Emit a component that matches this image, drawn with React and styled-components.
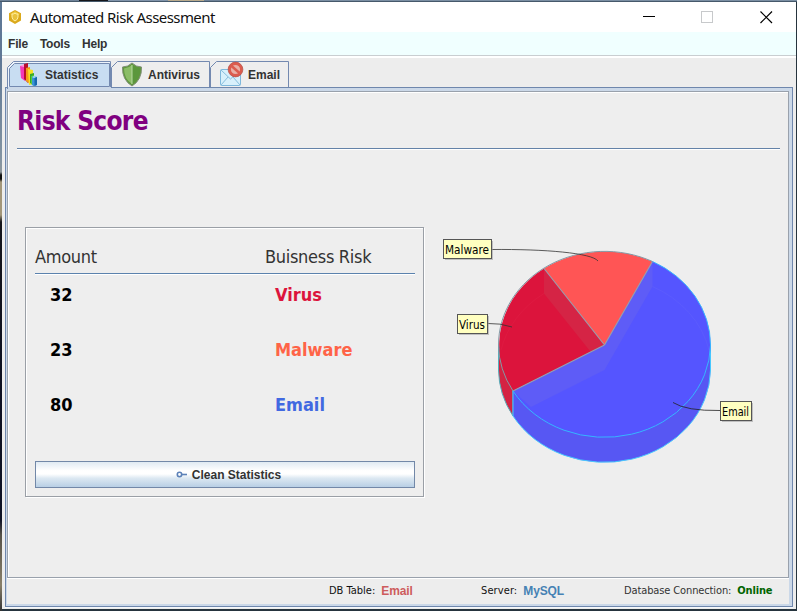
import React from "react";
import styled, { createGlobalStyle } from "styled-components";

const Global = createGlobalStyle`
  * { box-sizing: border-box; }
  html, body { margin: 0; overflow: hidden; }
`;
const tahoma = `"DejaVu Sans Condensed", "DejaVu Sans", sans-serif`;
const arial = `"Liberation Sans", Arial, sans-serif`;

const Desktop = styled.div`
  width: 797px;
  height: 611px;
  padding: 2px 1px 2px 2px;
  background:
    linear-gradient(90deg, #6f8298 79px, #16161a 79px 108px, #8093aa 108px 168px, #b9aa8c 168px 204px, #6f8298 204px 300px, #7b8fa3 300px) 0 0 / 797px 1px no-repeat,
    linear-gradient(90deg, #46596b, #46596b) 0 1px / 797px 1px no-repeat,
    linear-gradient(180deg, #5f7896 0 60px, #8494a2 160px, #8e979c 172px, #111 175px 179px, #a3977a 182px 215px, #15161c 222px, #0d1022 400px, #101426 520px, #57534a 535px, #89806a 585px, #333 611px) 0 0 / 2px 611px no-repeat,
    #26343e;
`;
const Window = styled.div`
  display: flex;
  flex-direction: column;
  height: 607px;
  background: #fff;
`;
const TitleBar = styled.header`
  display: flex;
  align-items: center;
  height: 30px;
  padding-left: 7px;
`;
const Title = styled.h1`
  flex: 1;
  margin: 0 0 0 9px;
  font: 400 15px/20px "Noto Sans", "Open Sans", sans-serif;
  letter-spacing: -0.57px;
  color: #111;
`;
const Controls = styled.svg`
  width: 160px;
  height: 30px;
`;
const MenuBar = styled.nav`
  display: flex;
  gap: 12px;
  height: 23px;
  padding: 3px 6px;
  background: #f0ffff;
  font: 700 12px/18px ${arial};
  letter-spacing: -0.2px;
  color: #333;
`;
const Body = styled.main`
  display: flex;
  flex-direction: column;
  flex: 1;
  padding: 3px 2px 0 3px;
  border-top: 1px solid #c9ced1;
  box-shadow: inset 0 2px #fff;
  background: #ededed;
`;
const Tabs = styled.div`
  display: flex;
  height: 28px;
  padding: 2px 0 0 2px;
`;
const Tab = styled.div`
  position: relative;
  display: flex;
  align-items: center;
  width: ${(p) => p.$w}px;
  height: 26px;
  padding-left: ${(p) => p.$pad}px;
  gap: ${(p) => p.$gap}px;
  font: 700 12px/16px ${arial};
  color: #333;
`;
const TabShape = styled.svg`
  position: absolute;
  top: 0;
  left: 0;
  width: ${(p) => p.$w}px;
  height: ${(p) => p.$h}px;
`;
const TabIcon = styled.svg`
  position: relative;
  width: ${(p) => p.$w}px;
  height: 25px;
  flex: none;
  overflow: visible;
`;
const TabText = styled.span`
  position: relative;
  top: 0.5px;
`;
const Frame = styled.div`
  display: flex;
  flex-direction: column;
  width: 788px;
  height: 520px;
  border: 1px solid #6f87ad;
  background: #ededed;
  padding: 3px 3px 2px 1px;
  box-shadow: inset 0 4px #cbd8e8, inset 1px 0 #cbd8e8, inset -3px 0 #cbd8e8, inset 0 -2px #cbd8e8, 0 1px #f5f8fb;
`;
const Panel = styled.section`
  height: 487px;
  flex: none;
  width: 782px;
  border: 1px solid #99a1ac;
  box-shadow: inset 1px 1px #fff, 0 1px #fff;
  background: #eee;
  padding: 0 8px 0 9px;
`;
const Heading = styled.h2`
  height: 57px;
  margin: 0 0 78px;
  padding-top: 13px;
  border-bottom: 1px solid #6382a8;
  box-shadow: 0 1px #fff;
  font: 700 26px/32px ${tahoma};
  letter-spacing: -0.7px;
  color: #800080;
`;
const Columns = styled.div`
  display: flex;
  gap: 8px;
  padding-left: 8px;
`;
const Card = styled.div`
  width: 399px;
  height: 270px;
  border: 1px solid #9a9fa6;
  box-shadow: inset 1px 1px #fff, 1px 1px #fff;
  padding: 15px 8px 0 9px;
  flex: none;
`;
const HeaderRow = styled.div`
  display: grid;
  grid-template-columns: 230px 1fr;
  height: 31px;
  border-bottom: 1px solid #5b82ad;
  box-shadow: 0 1px #fff;
  font: 400 18px/28px ${tahoma};
  letter-spacing: -0.3px;
  color: #333;
`;
const Row = styled.div`
  display: grid;
  grid-template-columns: 225px 1fr;
  height: 55px;
  padding-left: 15px;
  font: 700 18px/42px ${tahoma};
  color: #000;
`;
const Risk = styled.span`
  color: ${(p) => p.$c};
`;
const Button = styled.button`
  display: flex;
  justify-content: center;
  align-items: center;
  gap: 5px;
  width: 380px;
  height: 27px;
  margin-top: 22px;
  padding: 0 0 0 7px;
  border: 1px solid #7288a8;
  background: linear-gradient(#e0eaf3 0, #fff 35%, #fff 48%, #dce8f2 65%, #b8cfe5 100%);
  font: 700 12px/16px ${arial};
  color: #333;
`;
const KeyIcon = styled.svg`
  width: 11px;
  height: 9px;
`;
const Chart = styled.svg`
  width: 330px;
  height: 270px;
  flex: none;
  font: 400 13px ${tahoma};
`;
const StatusBar = styled.footer`
  display: flex;
  height: 27px;
  padding: 4px 0 0 322px;
  font: 400 11px/18px ${tahoma};
  color: #111;
`;
const Status = styled.div`
  display: flex;
  width: ${(p) => p.$w}px;
  gap: 6px;
  color: ${(p) => p.$c || "#111"};
  letter-spacing: ${(p) => p.$ls}px;
  white-space: nowrap;
`;
const Value = styled.strong`
  color: ${(p) => p.$c};
  font: 700 ${(p) => (p.$t ? 11 : 12)}px/18px ${(p) => (p.$t ? tahoma : arial)};
  letter-spacing: ${(p) => p.$ls || 0}px;
`;

function TabOutline({ w, active }) {
  const h = active ? 28 : 26;
  return (
    <TabShape $w={w} $h={h} viewBox={`0 0 ${w} ${h}`}>
      {active ? (
        <>
          <path d={`M.5 28V6.500L6.500.5H${w - 0.5}V28`} fill="#edf4fc" stroke="#7389b0" />
          <path d={`M1 26H${w}V28H1Z`} fill="#cbd8e8" />
          <path d={`M2.500 25.500V7.500L7.500 2.500H${w - 1.5}V25.500Z`} fill="#c8ddf2" stroke="#7389b0" />
        </>
      ) : (
        <path d={`M.5 26V6.500L6.500.5H${w - 0.5}V26`} fill="#eee" stroke="#7389b0" />
      )}
    </TabShape>
  );
}

function Label({ x, y, w, h = 18, children, tw }) {
  return (
    <g>
      <rect x={x + 2} y={y + 2} width={w} height={h} fill="#999" opacity=".55" />
      <rect x={x + 0.5} y={y + 0.5} width={w} height={h} fill="#ffffc0" stroke="#555" />
      <text x={x + 2} y={y + 15} textLength={tw} lengthAdjust="spacingAndGlyphs" fill="#000">{children}</text>
    </g>
  );
}

const risks = [
  ["32", "Virus", "#dc143c"],
  ["23", "Malware", "#ff6347"],
  ["80", "Email", "#4169e1"],
];

export default function App() {
  return (
    <Desktop>
      <Global />
      <Window>
        <TitleBar>
          <svg width="12" height="14" viewBox="0 0 12 14">
            <path d="M6 0L12 3.2V10.6L6 14L0 10.6V3.2Z" fill="#dba91b" />
            <path d="M6 1.3L11 4L6 6.5L1 4Z" fill="#f1c940" />
            <path d="M3 4Q5 4.3 6 3Q7 4.3 9 4V7Q9 9.6 6 11Q3 9.6 3 7Z" fill="#e9c23c" stroke="#fff0a4" />
          </svg>
          <Title>Automated Risk Assessment</Title>
          <Controls viewBox="0 0 160 30" shapeRendering="crispEdges">
            <path d="M7 14.5h12" stroke="#000" />
            <rect x="65.5" y="9.5" width="11" height="11" fill="none" stroke="#c7c9cb" />
            <path d="M124.500 9.500L136 21M136 9.500L124.500 21" stroke="#000" strokeWidth="1.200" shapeRendering="auto" />
          </Controls>
        </TitleBar>
        <MenuBar><span>File</span><span>Tools</span><span>Help</span></MenuBar>
        <Body>
          <Tabs>
            <Tab $w={104} $pad={12} $gap={6}>
              <TabOutline w={104} active />
              <TabIcon $w={20} viewBox="0 0 20 25">
                <path d="M1 4l5-1v16l-4-3z" fill="#f438b8" />
                <path d="M1 4l4-2 2 1-2 2z" fill="#ff9bd8" />
                <path d="M5 2l4-1v20l-4-4z" fill="#b8102e" />
                <path d="M7 6l4-1v17l-4-3z" fill="#f59a18" />
                <path d="M9 7l5 1v14l-4 1z" fill="#f7df24" />
                <path d="M11 12l4-1v12l-4-2z" fill="#36a92d" />
                <path d="M12 14l3-1v11l-3-2z" fill="#55cf3a" />
                <path d="M13 15l2-1 3 1v8l-3 1-2-1z" fill="#3a93d8" />
                <path d="M13 15l2-1 3 1-3 1z" fill="#a8e0f8" />
                <path d="M15.500 16l2.500-1v8l-2.500 1z" fill="#1768ae" />
              </TabIcon>
              <TabText>Statistics</TabText>
            </Tab>
            <Tab $w={99} $pad={11} $gap={6}>
              <TabOutline w={99} />
              <TabIcon $w={20} viewBox="0 0 20 25">
                <path d="M10 1Q14 5 19.500 5Q20 18 10 24Q0 18 .5 5Q6 5 10 1Z" fill="#5f983b" stroke="#7d8d75" />
                <path d="M10 3Q13 6 18 6.500Q18 17 10 22Z" fill="#5b973c" />
                <path d="M10 3Q7 6 2 6.500Q2 17 10 22Z" fill="#8bbd67" />
                <path d="M10 3v19" stroke="#b8d9a1" />
              </TabIcon>
              <TabText>Antivirus</TabText>
            </Tab>
            <Tab $w={79} $pad={10} $gap={4}>
              <TabOutline w={79} />
              <TabIcon $w={24} viewBox="0 0 24 25">
                <rect x=".5" y="7.500" width="20" height="16" rx="1" fill="#d8f0fb" stroke="#7eb8dc" />
                <path d="M1 8l9.500 9L20 8M1 23l7-8M20 23l-7-8" fill="none" stroke="#87bddc" />
                <circle cx="15.500" cy="7.500" r="6" fill="#e9b0a6" stroke="#dc5c4e" strokeWidth="2.800" />
                <path d="M11 3.500l9 8" stroke="#dc5c4e" strokeWidth="2.500" />
                <circle cx="15.500" cy="7.500" r="7.400" fill="none" stroke="#ad4a42" strokeWidth=".6" />
              </TabIcon>
              <TabText>Email</TabText>
            </Tab>
          </Tabs>
          <Frame>
            <Panel>
              <Heading>Risk Score</Heading>
              <Columns>
                <Card>
                  <HeaderRow><span>Amount</span><span>Buisness Risk</span></HeaderRow>
                  {risks.map(([n, name, c]) => (
                    <Row key={name}><span>{n}</span><Risk $c={c}>{name}</Risk></Row>
                  ))}
                  <Button>
                    <KeyIcon viewBox="0 0 11 9">
                      <circle cx="3.500" cy="4.500" r="2.200" fill="none" stroke="#5d82b8" strokeWidth="1.600" />
                      <path d="M6 4.500h5" stroke="#5d82b8" strokeWidth="1.600" />
                    </KeyIcon>
                    Clean Statistics
                  </Button>
                </Card>
                <Chart viewBox="432 227 330 270">
                  <path d="M498.500 345V370A106 93.500 0 0 0 513 416V391Z" fill="#d42343" stroke="#55aebb" />
                  <path d="M513 391V416A106 93.500 0 0 0 710.500 370V345Z" fill="#5757f3" stroke="#46c8ff" />
                  <path d="M604.500 345L513 391A106 93.500 0 0 1 544 268.500Z" fill="#dc143c" />
                  <path d="M604.500 345L544 268.500A106 93.500 0 0 1 652.500 261.500Z" fill="#ff5555" />
                  <path d="M604.500 345L652.500 261.500A106 93.500 0 0 1 710.500 345A106 93.500 0 0 1 513 391Z" fill="#5555ff" />
                  <path d="M604.500 345L544 268.500V293.500L594 356L594 350.500Z" fill="#d52445" />
                  <path d="M604.500 345L652.500 261.500V286.500L604.500 370L531 407L513 391Z" fill="#5e5cf7" />
                  <path d="M501 350A106 93.500 0 0 1 544 293.500" fill="none" stroke="#e02246" opacity=".45" />
                  <path d="M652.500 286.500A106 93.500 0 0 1 709 350" fill="none" stroke="#6564fb" opacity=".4" />
                  <path d="M604.500 345L544 268.500M604.500 345L652.500 261.500M604.500 345L513 391" stroke="#969eae" strokeWidth="1.100" />
                  <path d="M513 391A106 93.500 0 0 1 498.500 345A106 93.500 0 0 1 652.500 261.500" fill="none" stroke="#8598a5" />
                  <path d="M652.500 261.500A106 93.500 0 0 1 710.500 345A106 93.500 0 0 1 513 391" fill="none" stroke="#36b6ff" />
                  <path d="M492 249.500C545 249 592 253 598 261" fill="none" stroke="#333" strokeWidth=".8" />
                  <path d="M488 323.500Q500 323 512 327" fill="none" stroke="#333" strokeWidth=".8" />
                  <path d="M673 402.500Q686 411 720 410.500" fill="none" stroke="#222" strokeWidth=".8" />
                  <Label x={443} y={239} w={48} h={19} tw={44}>Malware</Label>
                  <Label x={457} y={314} w={30} h={19} tw={26}>Virus</Label>
                  <Label x={720} y={401} w={31} h={19} tw={27}>Email</Label>
                </Chart>
              </Columns>
            </Panel>
            <StatusBar>
              <Status $w={152} $ls={0}><span>DB Table:</span><Value $c="#cd5c5c" $ls={-0.1}>Email</Value></Status>
              <Status $w={143} $ls={0.1}><span>Server:</span><Value $c="#4682b4" $ls={-0.15}>MySQL</Value></Status>
              <Status $c="#333" $ls={-0.12}><span>Database Connection:</span><Value $c="#006400" $t $ls={-0.15}>Online</Value></Status>
            </StatusBar>
          </Frame>
        </Body>
      </Window>
    </Desktop>
  );
}
